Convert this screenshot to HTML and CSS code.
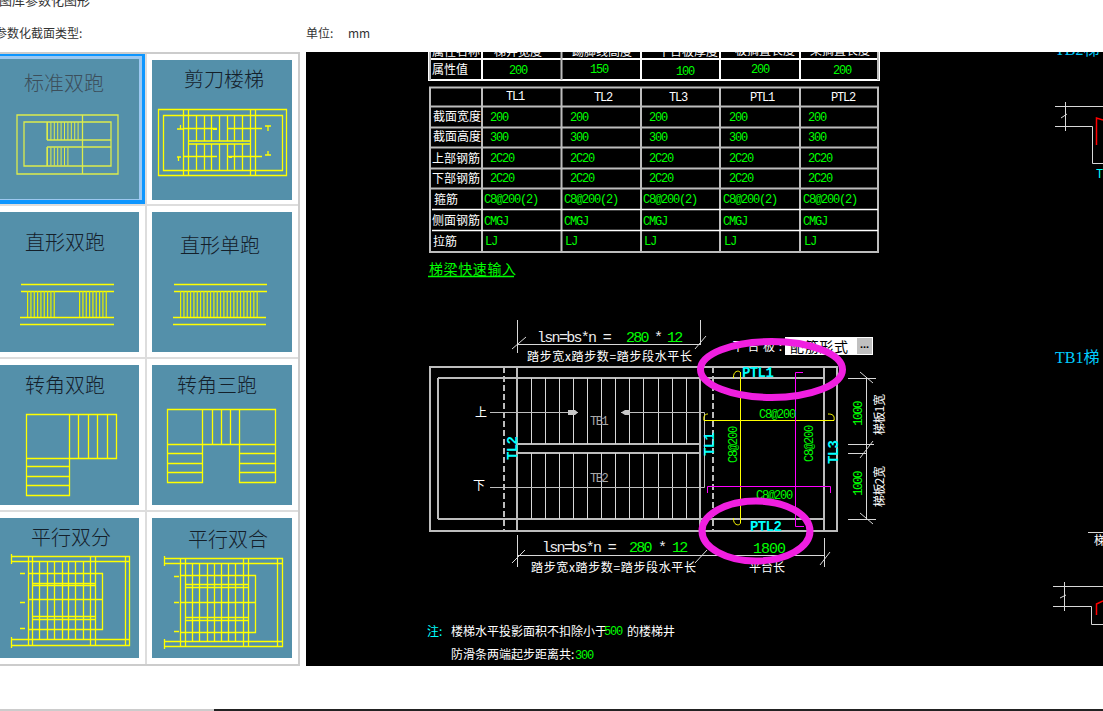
FILE: index.html
```html
<!DOCTYPE html>
<html lang="zh-CN">
<head>
<meta charset="utf-8">
<title>楼梯参数化图形</title>
<link rel="stylesheet" href="styles.css">
</head>
<body>
<header class="head">
  <div class="head-title">图库参数化图形</div>
  <div class="head-row">
    <span class="head-type">参数化截面类型:</span>
    <span class="head-unit">单位:</span>
    <span>mm</span>
  </div>
</header>
<main class="main">
  <section class="panel">
    <div class="cell cell-left cell-selected">
      <div class="frame">
        <svg class="tile tile-dim" viewBox="0 0 140 140">
          <text class="tt" x="25" y="32">标准双跑</text>
          <path class="ln" d="M18 56H119V115H18ZM25 63H112V107H25ZM83.500 56V115M48 81H112M48 88H112M48 63V81M48 88V107"/>
          <path class="dense" d="M48 72H81" stroke-dasharray="1 2.400"/>
          <path class="dense" d="M48 97.500H70" stroke-dasharray="1 2.400"/>
        </svg>
      </div>
    </div>
    <div class="cell">
      <svg class="tile" viewBox="0 0 140 140">
        <text class="tt" x="32" y="27">剪刀楼梯</text>
        <path class="ln" d="M6.500 49.500H134.500V115.500H6.500ZM11.500 55.500H130.500V110.500H11.500ZM31.500 49.500V115.500M36.500 49.500V115.500M98.500 49.500V115.500M103.500 49.500V115.500M36.500 81H98.500M36.500 84H98.500M44.500 55.500V81M44.500 84V110.500M52.500 55.500V81M52.500 84V110.500M59.500 55.500V81M59.500 84V110.500M67.500 55.500V81M67.500 84V110.500M75.500 55.500V81M75.500 84V110.500M82.500 55.500V81M82.500 84V110.500M90.500 55.500V81M90.500 84V110.500M31 68.500H65M76 68.500H110M31 96.500H65M76 96.500H110M25 69H31M28.500 65V69M25 97H29M26.500 97V101M113 66H119M116 66V71M113 95H119M116 91V95"/>
        <path class="ln ln-thick" d="M61 69H65M77 97H80"/>
      </svg>
    </div>
    <div class="cell cell-left">
      <svg class="tile" viewBox="0 0 140 140">
        <text class="tt" x="26" y="38">直形双跑</text>
        <path class="ln" d="M22 72.500H115M22 79.500H115M21 105.500H115M21 112.500H115"/>
        <path class="dense" d="M28 92H56" stroke-dasharray="1.200 2.130"/>
        <path class="dense" d="M80 92H108" stroke-dasharray="1.200 2.130"/>
      </svg>
    </div>
    <div class="cell">
      <svg class="tile" viewBox="0 0 140 140">
        <text class="tt" x="28" y="41">直形单跑</text>
        <path class="ln" d="M22 72.500H115M22 79.500H115M21 105.500H114M21 112.500H114"/>
        <path class="dense" d="M28 92H108" stroke-dasharray="1.200 2.130"/>
      </svg>
    </div>
    <div class="cell cell-left">
      <svg class="tile" viewBox="0 0 140 140">
        <text class="tt" x="26" y="28">转角双跑</text>
        <path class="ln" d="M27.500 49.500H117.500V93.500H27.500ZM27.500 93.500V130.500H70.500V49.500M79.500 49.500V93.500M89.500 49.500V93.500M98.500 49.500V93.500M108.500 49.500V93.500M27.500 101.500H70.500M27.500 111.500H70.500M27.500 120.500H70.500"/>
      </svg>
    </div>
    <div class="cell">
      <svg class="tile" viewBox="0 0 140 140">
        <text class="tt" x="25" y="28">转角三跑</text>
        <path class="ln" d="M15.500 44.500H123.500V117.500H87.500V79.500H50.500V117.500H15.500ZM15.500 79.500H50.500M87.500 79.500H123.500M50.500 44.500V79.500M60.500 44.500V79.500M69.500 44.500V79.500M78.500 44.500V79.500M87.500 44.500V79.500M15.500 88.500H50.500M15.500 98.500H50.500M15.500 107.500H50.500M87.500 88.500H123.500M87.500 98.500H123.500M87.500 107.500H123.500"/>
      </svg>
    </div>
    <div class="cell cell-left">
      <svg class="tile" viewBox="0 0 140 140">
        <text class="tt" x="32" y="27">平行双分</text>
        <path class="ln" d="M12.500 38.500H130.500V127.500H12.500V121.500H130.500M12.500 38.500V43.500H130.500M29.500 38.500V127.500M33.500 38.500V127.500M91.500 38.500V127.500M96.500 38.500V127.500M126.500 38.500V127.500M29.500 55.500H103.500V111.500H29.500M29.500 81.500H103.500M33.500 65.500H96.500M33.500 67.500H96.500M33.500 98.500H96.500M33.500 101.500H96.500M40.500 43.500V121.500M48.500 43.500V121.500M55.500 43.500V121.500M63.500 43.500V121.500M69.500 43.500V121.500M76.500 43.500V121.500M84.500 43.500V121.500M21 55.500H26M21 84.500H26M21 110.500H26M12.500 36V46M12.500 119V130"/>
      </svg>
    </div>
    <div class="cell">
      <svg class="tile" viewBox="0 0 140 140">
        <text class="tt" x="36" y="29">平行双合</text>
        <path class="ln" d="M12.500 40.500H130.500V128.500H12.500V123.500H130.500M12.500 40.500V45.500H130.500M28.500 40.500V128.500M33.500 40.500V128.500M91.500 40.500V128.500M96.500 40.500V128.500M125.500 40.500V128.500M28.500 57.500H103.500V114.500H28.500M28.500 84.500H103.500M33.500 66.500H96.500M33.500 69.500H96.500M33.500 99.500H96.500M33.500 102.500H96.500M40.500 45.500V123.500M47.500 45.500V123.500M55.500 45.500V123.500M62.500 45.500V123.500M69.500 45.500V123.500M76.500 45.500V123.500M83.500 45.500V123.500M22 58.500H27M22 84.500H27M22 113.500H27M12.500 38V48M12.500 121V131"/>
      </svg>
    </div>
  </section>
  <section class="canvas">
    <svg class="cad" viewBox="306 52 797 614">
      <!-- property table -->
      <path class="white2" d="M429 52V80H879V52M482 52V80M641 52V80M720 52V80M800 52V80M429 59H879"/>
      <path class="gray2" d="M430 52V80M561.500 52V80M878 52V80"/>
      <g class="cn">
        <text x="432" y="56">属性名称</text>
        <text x="494" y="56">梯井宽度</text>
        <text x="572" y="56">踢脚线高度</text>
        <text x="658" y="56">平台板厚度</text>
        <text x="735" y="55">板搁置长度</text>
        <text x="810" y="55">梁搁置长度</text>
        <text x="432" y="74">属性值</text>
      </g>
      <g class="num">
        <text x="509" y="74">200</text>
        <text x="590" y="73">150</text>
        <text x="676" y="75">100</text>
        <text x="751" y="73">200</text>
        <text x="833" y="74">200</text>
      </g>
      <!-- beam table -->
      <path class="gray2" d="M430 87.500H878V252H430ZM482 87.500V252M561.500 87.500V252M641 87.500V252M720 87.500V252M800 87.500V252M430 106.500H878M430 127.500H878M430 147.500H878M430 168.500H878M430 188.500H878"/>
      <path class="white1" d="M482 209.500H878M482 230.500H878M432 209.500H482M432 230.500H482"/>
      <g class="hd">
        <text x="506" y="100">TL1</text>
        <text x="594" y="101">TL2</text>
        <text x="669" y="101">TL3</text>
        <text x="750" y="101">PTL1</text>
        <text x="831" y="101">PTL2</text>
      </g>
      <g class="cn">
        <text x="433" y="121">截面宽度</text>
        <text x="433" y="141">截面高度</text>
        <text x="432" y="163">上部钢筋</text>
        <text x="432" y="183">下部钢筋</text>
        <text x="434" y="204">箍筋</text>
        <text x="432" y="225">侧面钢筋</text>
        <text x="433" y="246">拉筋</text>
      </g>
      <g class="num">
        <text x="490" y="121">200</text><text x="570" y="121">200</text><text x="649" y="121">200</text><text x="729" y="121">200</text><text x="808" y="121">200</text>
        <text x="490" y="141">300</text><text x="570" y="141">300</text><text x="649" y="141">300</text><text x="729" y="141">300</text><text x="808" y="141">300</text>
        <text x="490" y="162">2C20</text><text x="570" y="162">2C20</text><text x="649" y="162">2C20</text><text x="729" y="162">2C20</text><text x="808" y="162">2C20</text>
        <text x="490" y="182">2C20</text><text x="570" y="182">2C20</text><text x="649" y="182">2C20</text><text x="729" y="182">2C20</text><text x="808" y="182">2C20</text>
        <text x="484" y="203">C8@200(2)</text><text x="564" y="203">C8@200(2)</text><text x="643" y="203">C8@200(2)</text><text x="723" y="203">C8@200(2)</text><text x="803" y="203">C8@200(2)</text>
        <text x="484" y="225">CMGJ</text><text x="564" y="225">CMGJ</text><text x="643" y="225">CMGJ</text><text x="723" y="225">CMGJ</text><text x="803" y="225">CMGJ</text>
        <text x="485" y="245">LJ</text><text x="565" y="245">LJ</text><text x="644" y="245">LJ</text><text x="724" y="245">LJ</text><text x="804" y="245">LJ</text>
      </g>
      <text class="link" x="429" y="274" textLength="87">梯梁快速输入</text>
      <path class="green-line" d="M428 276.500H514"/>

      <!-- stair plan -->
      <path class="gray2" d="M430 367H837V531H430ZM438 378H824M438 519H824M438 378V519M517 367V531M824 367V531M700 378V531M517 444H700M517 453H700"/>
      <path class="dash" d="M504 367V531M713 367V531"/>
      <path class="thin" d="M531.500 378V444M545.500 378V444M559.500 378V444M573.500 378V444M587.500 378V444M601.500 378V444M615.500 378V444M629.500 378V444M643.500 378V444M658.500 378V444M672.500 378V444M686.500 378V444M531.500 453V519M545.500 453V519M559.500 453V519M573.500 453V519M587.500 453V519M601.500 453V519M615.500 453V519M629.500 453V519M643.500 453V519M658.500 453V519M672.500 453V519M686.500 453V519"/>
      <path class="thin-g" d="M490 412.500H578M621 412.500H704.500V487.500H490"/>
      <path class="fill-g" d="M568 410H575L578 412.500L575 415H568ZM621 412.500L625 410H630V415H625Z"/>
      <g class="cn">
        <text x="475" y="417">上</text>
        <text x="473" y="490">下</text>
      </g>
      <text class="tag" x="590" y="425">TB1</text>
      <text class="tag" x="590" y="482">TB2</text>
      <text class="cy" transform="rotate(-90 517 460)" x="517" y="460">TL2</text>
      <text class="cy" transform="rotate(-90 714 456)" x="714" y="456">TL1</text>
      <text class="cy" transform="rotate(-90 838 464)" x="838" y="464">TL3</text>
      <text class="cy cy-h" x="742" y="377">PTL1</text>
      <text class="cy cy-h" x="750" y="531">PTL2</text>

      <!-- dimensions -->
      <path class="thin" d="M517.500 320V353M517.500 344.500H700M700.500 320V345M512 349L526 337M695 349L706 336M517.500 535V567M517.500 555.500H824M512 563L525 550M695 563L707 550M824.500 538V567M820 565L830 552M848 378.500H876M848 444.500H874M848 453.500H866M848 519.500H876M866.500 378V519M860 372L873 383M860 513L873 524M860 458L873 441"/>
      <text class="dim" x="537" y="342">lsn=bs*n =</text>
      <text class="dim-g" x="626" y="342">280</text>
      <text class="dim" x="654" y="342">*</text>
      <text class="dim-g" x="667" y="342">12</text>
      <text class="cap" x="527" y="361" textLength="165">踏步宽x踏步数=踏步段水平长</text>
      <text class="dim" x="542" y="552">lsn=bs*n =</text>
      <text class="dim-g" x="629" y="552">280</text>
      <text class="dim" x="658" y="552">*</text>
      <text class="dim-g" x="672" y="552">12</text>
      <text class="cap" x="531" y="572" textLength="165">踏步宽x踏步数=踏步段水平长</text>
      <text class="cap" x="749" y="572">平台长</text>
      <text class="dim-g dim-w" x="753" y="553">1800</text>

      <!-- rebar -->
      <path class="yel" d="M740.500 372V523M733.500 378C733 370 740 370 740.500 373M733.500 518C733 526 740 526 740.500 523M704 420.500H834M704 420.500C703 415 706 414 708 414M834 420.500C835 415 832 414 828 414"/>
      <path class="mag" d="M803 372.500H795.500V526.500H804M707.500 493V486.500H830.500V493"/>
      <g class="num">
        <text x="759" y="418">C8@200</text>
        <text x="756" y="499">C8@200</text>
        <text transform="rotate(-90 737 463)" x="737" y="463">C8@200</text>
        <text transform="rotate(-90 813 462)" x="813" y="462">C8@200</text>
        <text class="num-wide" transform="rotate(-90 862 426)" x="862" y="426">1000</text>
        <text class="num-wide" transform="rotate(-90 862 496)" x="862" y="496">1000</text>
      </g>
      <g class="cn">
        <text transform="rotate(-90 884 435)" x="884" y="435" textLength="41">梯板1宽</text>
        <text transform="rotate(-90 884 507)" x="884" y="507" textLength="41">梯板2宽</text>
        <text x="732" y="351" textLength="50">平台板:</text>
      </g>
      <rect class="combo" x="785" y="337" width="88" height="18"/>
      <rect class="combo-btn" x="857" y="338" width="15" height="16"/>
      <text class="combo-t" x="790" y="352" textLength="58">配筋形式</text>
      <text class="combo-d" x="860" y="348">...</text>

      <ellipse class="ring" cx="771.500" cy="369.500" rx="71" ry="28"/>
      <ellipse class="ring" cx="756" cy="531" rx="54" ry="30"/>

      <!-- notes -->
      <text class="cn-c" x="427" y="636">注:</text>
      <text class="cn" x="451" y="636">楼梯水平投影面积不扣除小于</text>
      <text class="num" x="604" y="635">500</text>
      <text class="cn" x="627" y="636">的楼梯井</text>
      <text class="cn" x="451" y="659">防滑条两端起步距离共:</text>
      <text class="num" x="575" y="659">300</text>

      <!-- neighbouring details, cut by the right edge -->
      <text class="side" x="1055" y="55">TB2梯</text>
      <text class="side" x="1055" y="363">TB1梯</text>
      <path class="thin" d="M1055 106.500H1103M1055 126.500H1092.500V163.500H1103M1065.500 102V131M1061 118L1067 114M1053 586.500H1103M1053 606.500H1091.500V624.500H1103M1064.500 582V611M1060 598L1066 595M1088 532.500H1103"/>
      <path class="red" d="M1096.500 145V118L1103 120M1096.500 615V604L1103 601"/>
      <text class="tag-c" x="1096" y="178">T</text>
      <text class="cn" x="1094" y="545">梯</text>
    </svg>
  </section>
</main>
<footer class="foot">
  <div class="foot-left"></div>
  <div class="foot-right"></div>
</footer>
</body>
</html>
```
FILE: styles.css
```css
html, body {
  margin: 0;
  padding: 0;
  height: 711px;
  overflow: hidden;
  background: #fff;
}
body {
  display: flex;
  flex-direction: column;
  font-family: "Noto Sans CJK SC", "Liberation Sans", sans-serif;
  font-size: 12px;
  color: #333;
}
.head {
  height: 52px;
  flex: none;
}
.head-title {
  font-size: 13px;
  line-height: 14px;
  margin-top: -7px;
  margin-left: -1px;
}
.head-row {
  display: flex;
  margin-top: 19px;
  line-height: 14px;
}
.head-type {
  width: 311px;
  margin-left: -5px;
  flex: none;
}
.head-unit {
  width: 42px;
  flex: none;
}
.main {
  display: flex;
  height: 614px;
  flex: none;
}
.panel {
  box-sizing: border-box;
  width: 300px;
  height: 614px;
  flex: none;
  display: grid;
  grid-template-columns: 147px 151px;
  grid-template-rows: 152px 153px 153px 152px;
  border-top: 2px solid #ccc;
  border-right: 2px solid #ccc;
  border-bottom: 2px solid #ccc;
}
.cell {
  box-sizing: border-box;
  display: flex;
  justify-content: flex-end;
  align-items: flex-start;
  padding: 6px 6px 0 0;
  border-bottom: 2px solid #ddd;
}
.cell-left {
  border-right: 2px solid #ddd;
}
.cell:nth-last-child(-n+2) {
  border-bottom: 0;
}
.cell-selected {
  padding: 0;
}
.frame {
  display: flex;
  flex: none;
  padding: 3px 3px 1px 0;
  background: #9cc8f0;
  border-style: solid;
  border-color: #0d96ff;
  border-width: 2px 3px 4px 0;
}
.tile {
  display: block;
  width: 140px;
  height: 140px;
  flex: none;
  background: #5490aa;
}
.tt {
  font-size: 20px;
  font-weight: 300;
  fill: #14202a;
}
.tile-dim .tt {
  fill: #3c4e5a;
}
.ln {
  fill: none;
  stroke: #ff0;
  stroke-width: 1.300;
}
.ln-thick {
  stroke-width: 2;
}
.tile-dim .ln {
  stroke: #dcec4c;
}
.dense {
  fill: none;
  stroke: #e6f000;
  stroke-width: 26;
}
.tile-dim .dense {
  stroke-width: 18;
  stroke: #dcec4c;
}
.canvas {
  margin-left: 6px;
  width: 797px;
  height: 614px;
  flex: none;
  background: #000;
}
.cad {
  display: block;
  width: 797px;
  height: 614px;
}
.cad path, .cad ellipse {
  fill: none;
}
.white2 {
  stroke: #fff;
  stroke-width: 2;
}
.white1 {
  stroke: #fff;
  stroke-width: 1.500;
}
.gray2 {
  stroke: #bdbdbd;
  stroke-width: 2;
}
.dash {
  stroke: #bdbdbd;
  stroke-width: 2;
  stroke-dasharray: 6 3;
}
.thin {
  stroke: #d8d8d8;
  stroke-width: 1;
}
.thin-g {
  stroke: #bdbdbd;
  stroke-width: 1;
}
.cad .fill-g {
  fill: #c8c8c8;
}
.green-line {
  stroke: #0f0;
  stroke-width: 1.500;
}
.yel {
  stroke: #ff0;
  stroke-width: 1;
}
.mag {
  stroke: #ff00ff;
  stroke-width: 1;
}
.red {
  stroke: #f00;
  stroke-width: 1.500;
}
.ring {
  stroke: #f01fe0;
  stroke-width: 7;
}
.cn, .cn text, .cap {
  font-size: 12px;
  fill: #fff;
}
.cn-c {
  font-size: 12px;
  fill: #0ff;
}
.num, .num text {
  font-family: "Liberation Mono", monospace;
  font-size: 12px;
  letter-spacing: -1.200px;
  fill: #0f0;
}
.num .num-wide {
  font-size: 13px;
  letter-spacing: -1.900px;
}
.hd text {
  font-family: "Liberation Mono", monospace;
  font-size: 12px;
  letter-spacing: -1.200px;
  fill: #fff;
}
.link {
  font-size: 14px;
  fill: #0f0;
}
.tag {
  font-family: "Liberation Mono", monospace;
  font-size: 12px;
  letter-spacing: -1.500px;
  fill: #aaa;
}
.tag-c {
  font-family: "Liberation Mono", monospace;
  font-size: 12px;
  fill: #0ff;
}
.cy {
  font-family: "Liberation Mono", monospace;
  font-size: 14px;
  font-weight: bold;
  letter-spacing: -0.600px;
  fill: #0ff;
}
.dim, .dim-g {
  font-family: "Liberation Mono", monospace;
  font-size: 15px;
  letter-spacing: -1.700px;
}
.dim {
  fill: #eee;
}
.dim-g {
  fill: #0f0;
}
.dim-w {
  letter-spacing: -1px;
}
.cad .combo {
  fill: #fff;
}
.cad .combo-btn {
  fill: #c0c0c0;
}
.combo-t {
  font-size: 14px;
  fill: #000;
}
.combo-d {
  font-family: "Liberation Sans", sans-serif;
  font-size: 11px;
  font-weight: bold;
  fill: #000;
}
.side {
  font-family: "Liberation Serif", "Noto Sans CJK SC", serif;
  font-size: 16px;
  fill: #0cf;
}
.foot {
  flex: 1;
  display: flex;
  align-items: flex-end;
}
.foot-left {
  width: 214px;
  height: 2px;
  background: #ccc;
}
.foot-right {
  flex: 1;
  height: 2px;
  background: #222;
}
```
